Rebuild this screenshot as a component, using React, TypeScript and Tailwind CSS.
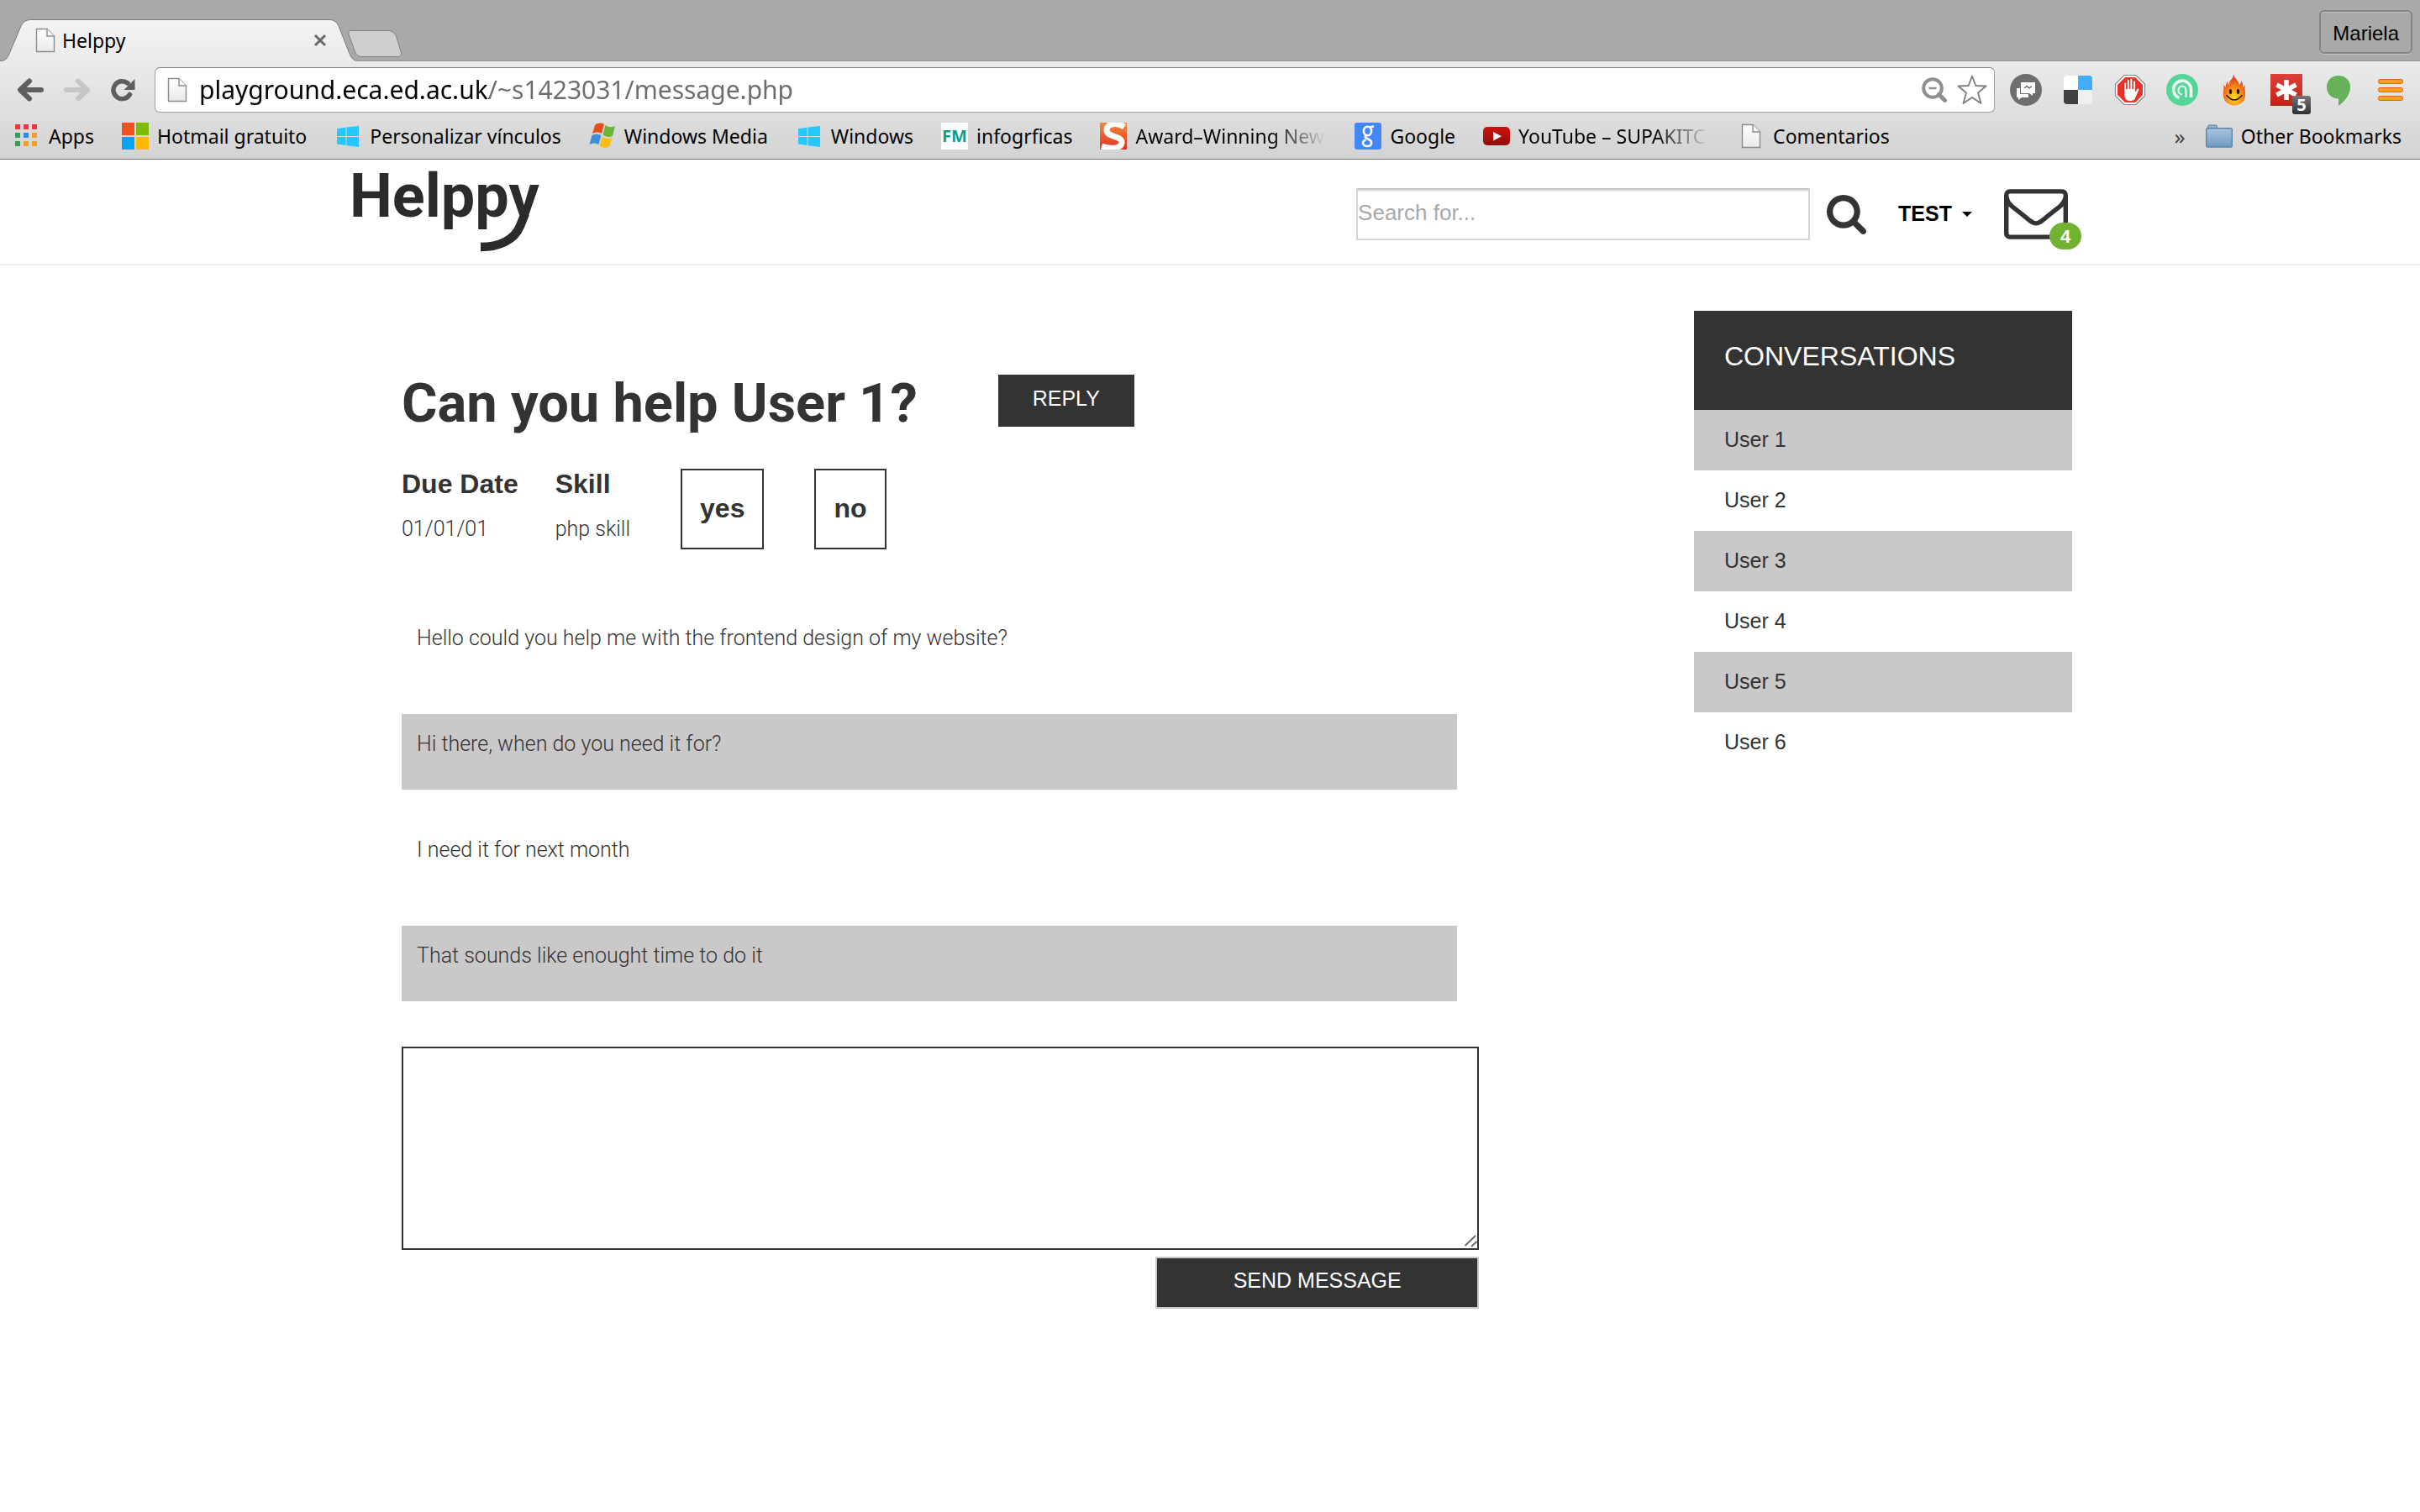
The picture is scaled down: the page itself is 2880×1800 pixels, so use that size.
import type { ReactNode } from "react";

const INK = "#333333";

/* ---------- Browser chrome icons ---------- */

function PageIcon() {
  return (
    <svg viewBox="0 0 24 30" className="h-[30px] w-6 shrink-0" aria-hidden="true">
      <defs>
        <linearGradient id="page-fill" x1="0" y1="0" x2="0" y2="1">
          <stop offset="0" stopColor="#ffffff" />
          <stop offset="1" stopColor="#e9e9e9" />
        </linearGradient>
      </defs>
      <path d="M1.500 1.500H14L22.500 10V28.500H1.500Z" fill="url(#page-fill)" stroke="#8c8c8c" strokeWidth="1.400" />
      <path d="M14 1.500V10H22.500" fill="#fafafa" stroke="#8c8c8c" strokeWidth="1.400" />
    </svg>
  );
}

function ArrowIcon({ forward = false }: { forward?: boolean }) {
  return (
    <svg viewBox="0 0 32 28" className="h-7 w-8" fill="none" aria-hidden="true">
      <path
        d={forward ? "M3 14H27M17 3.500L28 14L17 24.500" : "M29 14H5M15 3.500L4 14L15 24.500"}
        stroke={forward ? "#c6c6c6" : "#5f5f5f"}
        strokeWidth="6"
        strokeLinecap="round"
        strokeLinejoin="round"
      />
    </svg>
  );
}

function ReloadIcon() {
  return (
    <svg viewBox="0 0 30 28" className="h-7 w-[30px]" fill="none" aria-hidden="true">
      <path d="M22.500 19.500A10.500 10.500 0 1 1 20 6" stroke="#5f5f5f" strokeWidth="5.500" strokeLinecap="round" />
      <path d="M28.500 1V14H15.500Z" fill="#5f5f5f" />
    </svg>
  );
}

function AppsIcon() {
  const cells = ["#f5333f", "#f5333f", "#f5333f", "#3a9c5c", "#2b8cf0", "#f0a024", "#3a9c5c", "#f0a024", "#f0a024"];
  return (
    <svg viewBox="0 0 32 32" className="size-8" aria-hidden="true">
      {cells.map((fill, i) => (
        <rect key={i} x={2 + (i % 3) * 10} y={2 + Math.floor(i / 3) * 10} width="6" height="6" fill={fill} />
      ))}
    </svg>
  );
}

function MicrosoftIcon() {
  return (
    <svg viewBox="0 0 32 32" className="size-8" aria-hidden="true">
      <path d="M0 0H15V15H0Z" fill="#f35022" />
      <path d="M17 0H32V15H17Z" fill="#80bb03" />
      <path d="M0 17H15V32H0Z" fill="#03a5f0" />
      <path d="M17 17H32V32H17Z" fill="#ffb903" />
    </svg>
  );
}

function WindowsIcon() {
  return (
    <svg viewBox="0 0 32 32" className="size-8" fill="#23c8ff" aria-hidden="true">
      <path d="M3 7.200L13.500 5.800V16H3ZM14.500 5.600L29 4V16H14.500ZM3 17H13.500V27L3 25.600ZM14.500 17H29V29L14.500 27.200Z" />
    </svg>
  );
}

function WindowsFlagIcon() {
  return (
    <svg viewBox="0 0 32 32" className="size-8" aria-hidden="true">
      <path d="M7 3C11 0 14 0 18 2L15 13C11 11 8 11 4 13Z" fill="#e2501c" />
      <path d="M19.500 3C23 5.500 27 6 31 4L28 16C24 18 20 17 16.500 14.500Z" fill="#6db53a" />
      <path d="M3.500 15C7 13 11 13 14.500 15L11.500 26C8 24 4 24 0.500 26Z" fill="#3f8fd6" />
      <path d="M16 16.500C19.500 19 23.500 19.500 27.500 18L24.500 28C21 31 16 30 12.500 27.500Z" fill="#fbbd16" />
    </svg>
  );
}

function InfographicIcon() {
  return (
    <span className="flex size-8 items-center justify-center bg-white text-[20px] leading-8 font-bold text-[#0b9e8c]">
      FM
    </span>
  );
}

function AwardIcon() {
  return (
    <svg viewBox="0 0 32 32" className="size-8" aria-hidden="true">
      <defs>
        <linearGradient id="award-fill" x1="0" y1="0" x2="0" y2="1">
          <stop offset="0" stopColor="#f28a3a" />
          <stop offset="1" stopColor="#e03024" />
        </linearGradient>
      </defs>
      <rect width="32" height="32" fill="url(#award-fill)" />
      <path d="M29 5C20 -1 8 1 8 9C8 18 27 15 26 24C25 31 13 32 2 28" fill="none" stroke="#ffffff" strokeWidth="7" />
    </svg>
  );
}

function GoogleIcon() {
  return (
    <svg viewBox="0 0 32 32" className="size-8" aria-hidden="true">
      <rect width="32" height="32" rx="3" fill="#4387fd" />
      <g fill="none" stroke="#ffffff" strokeWidth="2.600">
        <ellipse cx="15.500" cy="10" rx="4.600" ry="5.200" />
        <path d="M18 5.500L23 4.500M14 15C11 17 13.500 18.500 17 20C22 22.500 20.500 28 15.500 28C9.500 28 8 22.500 13.500 20.500" />
      </g>
    </svg>
  );
}

function YouTubeIcon() {
  return (
    <svg viewBox="0 0 32 32" className="size-8" aria-hidden="true">
      <defs>
        <linearGradient id="tube-fill" x1="0" y1="0" x2="0" y2="1">
          <stop offset="0" stopColor="#d0120e" />
          <stop offset="1" stopColor="#8e0f0c" />
        </linearGradient>
      </defs>
      <rect y="5" width="32" height="22" rx="5" fill="url(#tube-fill)" />
      <path d="M12 11V21.500L22 16.200Z" fill="#ffffff" />
    </svg>
  );
}

function FolderIcon() {
  return (
    <svg viewBox="0 0 32 28" className="h-7 w-8" aria-hidden="true">
      <defs>
        <linearGradient id="folder-fill" x1="0" y1="0" x2="0" y2="1">
          <stop offset="0" stopColor="#a9c4de" />
          <stop offset="1" stopColor="#6f9ac4" />
        </linearGradient>
      </defs>
      <path d="M2.500 5V2.500Q2.500 1 4 1H12Q13.500 1 13.500 2.500V5Z" fill="#8fb0d0" stroke="#5d82a8" />
      <rect x="0.700" y="4.700" width="30.600" height="22.300" rx="1.500" fill="url(#folder-fill)" stroke="#5d82a8" strokeWidth="1.400" />
    </svg>
  );
}

/* ---------- Extension icons ---------- */

function ChatExtension() {
  return (
    <svg viewBox="0 0 38 38" className="size-[38px]" aria-hidden="true">
      <circle cx="19" cy="19" r="19" fill="#6e6e6e" />
      <path d="M13 10H30V23H27V26L23 23H13Z" fill="#ffffff" />
      <path d="M8 17H12V24H22V28H14L10 31V28H8Z" fill="#ffffff" />
      <path d="M17 17L20 14.500L23 17L26 14.500" fill="none" stroke="#6e6e6e" strokeWidth="1.500" />
    </svg>
  );
}

function DeliciousExtension() {
  return (
    <span className="grid size-[34px] grid-cols-2 overflow-hidden rounded-[4px]">
      <span className="bg-white" />
      <span className="bg-[#46acff]" />
      <span className="bg-[#404040]" />
      <span className="bg-[#f0f0f0]" />
    </span>
  );
}

function AdBlockExtension() {
  return (
    <svg viewBox="0 0 38 38" className="size-[38px]" aria-hidden="true">
      <path d="M12 1.500H26L36.500 12V26L26 36.500H12L1.500 26V12Z" fill="#ffffff" stroke="#8a8a8a" strokeWidth="1.200" />
      <path d="M13 4H25L34 13V25L25 34H13L4 25V13Z" fill="#ee3126" />
      <path
        d="M12 20V11.500Q12 10 13.300 10Q14.600 10 14.600 11.500V18H15.400V8Q15.400 6.500 16.800 6.500Q18.200 6.500 18.200 8V17.500H19V6.800Q19 5.300 20.400 5.300Q21.800 5.300 21.800 6.800V17.800H22.600V9.500Q22.600 8 24 8Q25.400 8 25.400 9.500V21L27.500 17.500Q28.500 16.500 29.500 17.500Q30 18.300 29.500 19.500L26 27.500Q24.500 32.500 19.500 32.500Q12 32.500 12 25Z"
        fill="#ffffff"
        stroke="#b5281f"
        strokeWidth="0.700"
      />
    </svg>
  );
}

function GreenLoopExtension() {
  return (
    <svg viewBox="0 0 38 38" className="size-[38px]" fill="none" aria-hidden="true">
      <circle cx="19" cy="19" r="19" fill="#55d597" />
      <path d="M15.500 28.500A10.500 10.500 0 1 1 29.500 19V28" stroke="#e6faf0" strokeWidth="3.600" />
      <path d="M23.500 28V19.500A4.500 5 0 1 0 19 24.500" stroke="#e6faf0" strokeWidth="2.200" />
    </svg>
  );
}

function FlameExtension() {
  return (
    <svg viewBox="0 0 38 38" className="size-[38px]" aria-hidden="true">
      <defs>
        <radialGradient id="flame-fill" cx="0.500" cy="0.750" r="0.700">
          <stop offset="0" stopColor="#ffe11a" />
          <stop offset="0.500" stopColor="#f98a1c" />
          <stop offset="1" stopColor="#d8321c" />
        </radialGradient>
      </defs>
      <path
        d="M18 0.500Q19 5 22 7Q24 9.500 25 13Q27 11 27.500 8Q29.500 12 29.500 16Q31 15.500 32 13Q31 17 32 22C33.500 31 27 37.500 19 37.500C11 37.500 4.500 31 6 22Q7 17 6 13Q7.500 14.500 8.500 16Q9 11 11 9Q11 12 12.500 13Q13 8 16 6Q18 4 18 0.500Z"
        fill="url(#flame-fill)"
      />
      <ellipse cx="14.500" cy="21" rx="1.700" ry="3" fill="#2b1705" />
      <ellipse cx="23.500" cy="21" rx="1.700" ry="3" fill="#2b1705" />
      <path d="M9.500 25Q19 37 28.500 25" fill="none" stroke="#2b1705" strokeWidth="1.500" />
    </svg>
  );
}

function PasswordExtension() {
  return (
    <span className="relative block size-[38px] bg-linear-to-b from-[#de4137] to-[#bf2216]">
      <svg viewBox="0 0 38 38" className="size-[38px]" aria-hidden="true">
        <path d="M19 7V31M7.500 13L30.500 25M7.500 25L30.500 13" stroke="#ffffff" strokeWidth="5.500" />
      </svg>
      <span className="absolute -right-2.5 -bottom-2.5 flex size-[22px] items-center justify-center rounded-[3px] bg-linear-to-b from-[#777777] to-[#303030] text-[20px] leading-none font-bold text-white">
        5
      </span>
    </span>
  );
}

function BalloonExtension() {
  return (
    <svg viewBox="0 0 38 38" className="size-[38px]" aria-hidden="true">
      <path d="M19 2C27 2 33 7.500 33 15.500C33 25 26 33 19 38V29.500C11 29.500 5 24 5 15.500C5 7.500 11 2 19 2Z" fill="#67b15a" />
    </svg>
  );
}

function MenuIcon() {
  return (
    <svg viewBox="0 0 38 38" className="size-[38px]" fill="#fba01f" stroke="#dd6310" strokeWidth="1" aria-hidden="true">
      <rect x="4.500" y="6.500" width="29" height="5" rx="2" />
      <rect x="4.500" y="16.500" width="29" height="5" rx="2" />
      <rect x="4.500" y="26.500" width="29" height="5" rx="2" />
    </svg>
  );
}

/* ---------- Browser chrome ---------- */

function TabStrip() {
  return (
    <div className="flex h-[73px] items-start justify-between border-b border-[#949494] bg-[#a9a9a9]">
      <div className="flex">
        <div className="relative flex h-[73px] w-[425px] shrink-0 items-center pt-[22px] pr-[36px] pl-[42px]">
          <svg viewBox="0 0 425 73" className="absolute inset-0 h-[73px] w-[425px]" aria-hidden="true">
            <defs>
              <linearGradient id="tab-fill" x1="0" y1="0" x2="0" y2="1">
                <stop offset="0" stopColor="#f3f3f3" />
                <stop offset="1" stopColor="#ebebeb" />
              </linearGradient>
            </defs>
            <path
              d="M0 72.500H2Q8 72 11 64L25 31Q28 24 36 23.500H393Q400 24 403 31L416 64Q419 72 425 72.500V73H0Z"
              fill="url(#tab-fill)"
            />
            <path
              d="M0 72.500H2Q8 72 11 64L25 31Q28 24 36 23.500H393Q400 24 403 31L416 64Q419 72 425 72.500"
              fill="none"
              stroke="#7b7b7b"
            />
          </svg>
          <div className="relative flex flex-1 items-center gap-2">
            <PageIcon />
            <span className="flex-1 text-[23px] leading-8">Helppy</span>
            <button type="button" aria-label="Close tab">
              <svg viewBox="0 0 16 16" className="size-4" aria-hidden="true">
                <path d="M2 2L14 14M14 2L2 14" stroke="#6a6a6a" strokeWidth="3" />
              </svg>
            </button>
          </div>
        </div>
        <button type="button" aria-label="New tab" className="-ml-3 pt-[31px]">
          <svg viewBox="0 0 66 34" className="h-[34px] w-[66px]" aria-hidden="true">
            <path
              d="M5 1.500H50Q56 2 58.500 8L64.500 28Q65 32 61 32.500H17Q12 32 9.500 27L2 6Q1 2 5 1.500Z"
              fill="#cfcfcf"
              stroke="#7f7f7f"
            />
          </svg>
        </button>
      </div>
      <button
        type="button"
        className="mt-3 mr-[9px] h-[52px] rounded-[6px] border-2 border-[#858585] px-3.5 pt-1 font-['Liberation_Sans',sans-serif] text-[24px] shadow-[inset_0_1px_0_#c2c2c2,0_1px_0_#c2c2c2]"
      >
        Mariela
      </button>
    </div>
  );
}

function AddressBar() {
  return (
    <div className="flex items-center gap-[18px] px-4 pt-[7px] pb-1.5">
      <nav aria-label="History" className="flex items-center gap-6 pr-1 pl-1">
        <button type="button" aria-label="Back"><ArrowIcon /></button>
        <button type="button" aria-label="Forward"><ArrowIcon forward /></button>
        <button type="button" aria-label="Reload"><ReloadIcon /></button>
      </nav>
      <div className="flex h-[54px] flex-1 items-center gap-3.5 rounded-[6px] border border-[#a0a0a0] border-t-[#858585] bg-white pr-2 pl-3.5">
        <PageIcon />
        <input
          type="text"
          aria-label="Address"
          defaultValue="playground.eca.ed.ac.uk/~s1423031/message.php"
          className="min-w-0 flex-1 bg-linear-to-r from-black from-[345px] to-[#6c6c6c] to-[345px] bg-clip-text text-[30px] leading-10 text-transparent outline-none"
        />
        <div className="flex items-center gap-3">
          <button type="button" aria-label="Zoom">
            <svg viewBox="0 0 30 30" className="size-[30px]" fill="none" stroke="#8f8f8f" aria-hidden="true">
              <circle cx="13" cy="13" r="10.800" strokeWidth="4" />
              <path d="M8.500 13H17.500" strokeWidth="2.500" />
              <path d="M20.500 20.500L27.500 27.500" strokeWidth="5" strokeLinecap="round" />
            </svg>
          </button>
          <button type="button" aria-label="Bookmark this page">
            <svg viewBox="0 0 36 36" className="size-9" aria-hidden="true">
              <path
                d="M18 1.500L22.300 13L34.500 13.500L25 21.500L28.500 34L18 27L7.500 34L11 21.500L1.500 13.500L13.700 13Z"
                fill="#ffffff"
                stroke="#7d7d7d"
                strokeWidth="1.800"
                strokeLinejoin="round"
              />
            </svg>
          </button>
        </div>
      </div>
      <div className="flex items-center gap-6">
        <button type="button" aria-label="Chat"><ChatExtension /></button>
        <button type="button" aria-label="Delicious" className="flex size-[38px] items-center justify-center">
          <DeliciousExtension />
        </button>
        <button type="button" aria-label="AdBlock"><AdBlockExtension /></button>
        <button type="button" aria-label="Loop"><GreenLoopExtension /></button>
        <button type="button" aria-label="Flame"><FlameExtension /></button>
        <button type="button" aria-label="Passwords"><PasswordExtension /></button>
        <button type="button" aria-label="Balloon"><BalloonExtension /></button>
        <button type="button" aria-label="Menu"><MenuIcon /></button>
      </div>
    </div>
  );
}

const bookmarks: { label: string; icon: ReactNode; long?: boolean }[] = [
  { label: "Apps", icon: <AppsIcon /> },
  { label: "Hotmail gratuito", icon: <MicrosoftIcon /> },
  { label: "Personalizar vínculos", icon: <WindowsIcon /> },
  { label: "Windows Media", icon: <WindowsFlagIcon /> },
  { label: "Windows", icon: <WindowsIcon /> },
  { label: "infogrficas", icon: <InfographicIcon /> },
  { label: "Award–Winning News", icon: <AwardIcon />, long: true },
  { label: "Google", icon: <GoogleIcon /> },
  { label: "YouTube – SUPAKITC", icon: <YouTubeIcon />, long: true },
  { label: "Comentarios", icon: <PageIcon /> },
];

function BookmarksBar() {
  return (
    <nav
      aria-label="Bookmarks"
      className="flex h-[49px] items-center justify-between pr-[22px] pb-1.5 pl-4 text-[23px] leading-8"
    >
      <ul className="flex min-w-0 items-center gap-[33px]">
        {bookmarks.map(({ label, icon, long }) => (
          <li key={label}>
            <a href="#" className="flex items-center gap-2.5 whitespace-nowrap">
              <span className="flex size-8 shrink-0 items-center justify-center">{icon}</span>
              <span
                className={
                  long ? "w-[228px] bg-linear-to-r from-black from-70% to-transparent bg-clip-text text-transparent" : ""
                }
              >
                {label}
              </span>
            </a>
          </li>
        ))}
      </ul>
      <div className="flex shrink-0 items-center gap-6">
        <button type="button" aria-label="More bookmarks" className="text-[26px] text-[#444444]">»</button>
        <a href="#" className="flex items-center gap-2.5">
          <FolderIcon />
          Other Bookmarks
        </a>
      </div>
    </nav>
  );
}

/* ---------- Site ---------- */

function Logo() {
  return (
    <a href="#" aria-label="Helppy home">
      <svg viewBox="-2 0 240 124" className="h-[124px] w-60" aria-hidden="true">
        <defs>
          <clipPath id="logo-clip">
            <path d="M0 0H240V66H189V124H0Z" />
          </clipPath>
        </defs>
        <text x="0" y="68" clipPath="url(#logo-clip)" fill="#2a2c2b" className="font-['Roboto',sans-serif] text-[72px] font-bold">
          Helppy
        </text>
        <path d="M209 64L203 79C196 96 178 104 156 104" fill="none" stroke="#2a2c2b" strokeWidth="10.500" />
      </svg>
    </a>
  );
}

function SiteHeader() {
  return (
    <header className="border-b-2 border-[#ededed]">
      <div className="mx-auto flex w-full max-w-[2052px] items-center justify-between pr-[5px]">
        <Logo />
        <div className="flex items-center gap-[38px] pt-1.5">
          <form className="flex items-center gap-5">
            <input
              type="search"
              aria-label="Search"
              placeholder="Search for..."
              className="h-[62px] w-[540px] border-2 border-[#d6d6d6] border-t-[#c4c4c4] pb-1 text-[26px] shadow-[inset_0_2px_0_#e4e4e4] outline-none placeholder:text-[#a9a9a9]"
            />
            <button type="button" aria-label="Submit search">
              <svg viewBox="0 128 1664 1664" className="size-[47px]" fill={INK} aria-hidden="true">
                <path d="M1152 832q0-185-131.500-316.500t-316.500-131.500-316.500 131.500-131.500 316.500 131.500 316.500 316.500 131.500 316.500-131.500 131.500-316.500zm512 832q0 52-38 90t-90 38q-54 0-90-38l-343-342q-179 124-399 124-143 0-273.500-55.500t-225-150-150-225-55.500-273.500 55.500-273.500 150-225 225-150 273.500-55.500 273.500 55.500 225 150 150 225 55.500 273.500q0 220-124 399l343 343q37 37 37 90z" />
              </svg>
            </button>
          </form>
          <button type="button" className="flex items-center gap-3 text-[25px] font-bold text-black">
            TEST
            <span className="border-x-6 border-t-6 border-x-transparent border-t-black" />
          </button>
          <a href="#" aria-label="Messages, 4 unread" className="relative">
            <svg viewBox="0 256 1792 1408" className="h-[60px] w-[76px]" fill={INK} aria-hidden="true">
              <path d="M1664 1504v-768q-32 36-69 66-268 206-426 338-51 43-83 67t-86.500 48.500-102.500 24.500h-2q-48 0-102.500-24.500t-86.500-48.500-83-67q-158-132-426-338-37-30-69-66v768q0 13 9.500 22.500t22.500 9.500h1472q13 0 22.500-9.500t9.500-22.500zm0-1051v-24.500l-.5-13-3-12.500-5.500-9-9-7.500-14-2.500h-1472q-13 0-22.500 9.500t-9.500 22.500q0 168 147 284 193 152 401 317 6 5 35 29.500t46 37.500 44.500 31.500 50.500 27.500 43 9h2q20 0 43-9t50.500-27.500 44.500-31.500 46-37.500 35-29.500q208-165 401-317 54-43 100.500-115.500t46.500-131.500zm128-37v1088q0 66-47 113t-113 47h-1472q-66 0-113-47t-47-113v-1088q0-66 47-113t113-47h1472q66 0 113 47t47 113z" />
            </svg>
            <span className="absolute -right-4 -bottom-3 flex h-8 w-[38px] items-center justify-center rounded-full bg-[#72b231] text-[22px] font-bold text-white">
              4
            </span>
          </a>
        </div>
      </div>
    </header>
  );
}

const messages = [
  "Hello could you help me with the frontend design of my website?",
  "Hi there, when do you need it for?",
  "I need it for next month",
  "That sounds like enought time to do it",
];

function Thread() {
  return (
    <section className="w-full max-w-[1282px] pt-[124px]">
      <div className="flex items-start gap-24">
        <h1 className="font-['Roboto',sans-serif] text-[65px] leading-[80px] font-bold">Can you help User 1?</h1>
        <button type="button" className="mt-1.5 h-[62px] w-[162px] bg-[#333333] pb-1 text-[25px] text-white">
          REPLY
        </button>
      </div>

      <div className="mt-[38px] flex items-start gap-15">
        <dl className="flex gap-11">
          <div>
            <dt className="text-[32px] leading-9 font-bold">Due Date</dt>
            <dd className="mt-[18px] font-['Roboto',sans-serif] text-[25px] leading-9 font-light">01/01/01</dd>
          </div>
          <div>
            <dt className="text-[32px] leading-9 font-bold">Skill</dt>
            <dd className="mt-[18px] font-['Roboto',sans-serif] text-[25px] leading-9 font-light">php skill</dd>
          </div>
        </dl>
        <button type="button" className="h-24 border-2 border-[#333333] px-[21px] pb-0.5 text-[32px] font-bold">yes</button>
        <button type="button" className="h-24 border-2 border-[#333333] px-[21px] pb-0.5 text-[32px] font-bold">no</button>
      </div>

      <ul className="mt-[70px] mr-[26px] flex flex-col gap-9 font-['Roboto',sans-serif] text-[25px] leading-9 font-light">
        {messages.map((message) => (
          <li key={message} className="min-h-[90px] p-[18px] even:bg-[#cac8c9]">
            {message}
          </li>
        ))}
      </ul>

      <form className="mt-[54px]">
        <div className="relative">
          <textarea
            aria-label="Your message"
            className="block h-[242px] w-full resize-none border-2 border-[#333333] p-2 text-[25px] outline-none"
          />
          <svg viewBox="0 0 16 16" className="pointer-events-none absolute right-0.5 bottom-0.5 size-4" aria-hidden="true">
            <path d="M1.500 13L14 1M9 14L15.500 8" fill="none" stroke="#6b6b6b" strokeWidth="2" />
          </svg>
        </div>
        <button
          type="button"
          className="mt-2 ml-auto block h-[62px] w-[30%] border-2 border-[#cac8c9] bg-[#333333] pb-1 text-[25px] text-white"
        >
          SEND MESSAGE
        </button>
      </form>
    </section>
  );
}

function Conversations() {
  const users = ["User 1", "User 2", "User 3", "User 4", "User 5", "User 6"];
  return (
    <aside className="mt-[54px] w-[450px] shrink-0">
      <h2 className="bg-[#333333] px-9 pt-9 pb-[46px] text-[32px] leading-9 text-white">CONVERSATIONS</h2>
      <ul className="text-[25px] leading-9">
        {users.map((user) => (
          <li key={user} className="odd:bg-[#cac8c9]">
            <a href="#" className="block px-9 pt-[17px] pb-[19px]">{user}</a>
          </li>
        ))}
      </ul>
    </aside>
  );
}

export default function App() {
  return (
    <div className="min-h-screen bg-white font-['Liberation_Sans',sans-serif] text-[#333333]">
      <div className="font-['Noto_Sans',sans-serif] text-black">
        <TabStrip />
        <div className="border-b border-[#737373] bg-linear-to-b from-[#ebebeb] to-[#d3d3d3]">
          <AddressBar />
          <BookmarksBar />
        </div>
      </div>
      <SiteHeader />
      <main className="mx-auto flex w-full max-w-[2052px] items-start justify-between gap-16 pl-16">
        <Thread />
        <Conversations />
      </main>
    </div>
  );
}
